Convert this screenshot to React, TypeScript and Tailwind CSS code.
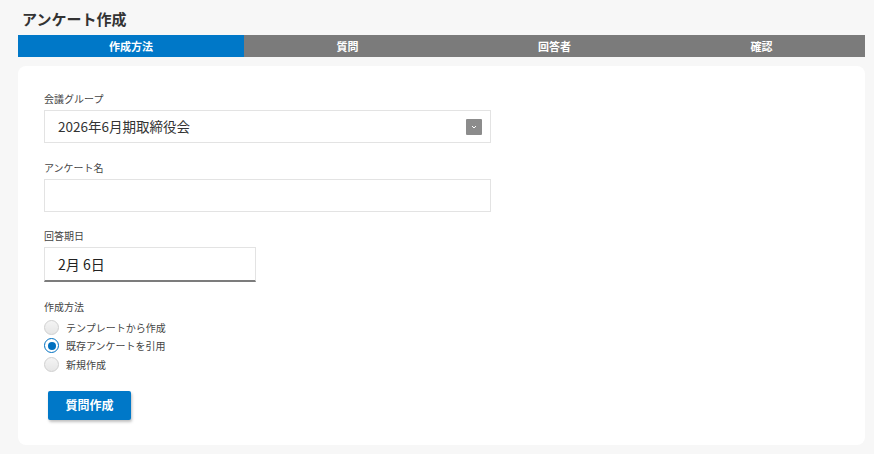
import React from "react";

const font = { fontFamily: '"Noto Sans CJK JP", "Noto Sans", sans-serif' };

function Radio({ checked, label }: { checked?: boolean; label: string }) {
  return (
    <label className="flex items-center h-[18.5px] gap-[7px]">
      {checked ? (
        <span className="w-[15px] h-[15px] rounded-full border-[1.5px] border-[#0070c0] bg-white flex items-center justify-center">
          <span className="w-[8px] h-[8px] rounded-full bg-[#0070c0]" />
        </span>
      ) : (
        <span className="w-[15px] h-[15px] rounded-full border border-[#d0d0d0] bg-gradient-to-b from-[#f4f4f4] to-[#e6e6e6]" />
      )}
      <span className="text-[10px] text-[#444]">{label}</span>
    </label>
  );
}

export default function App() {
  return (
    <div className="w-[874px] h-[454px] bg-[#f7f7f7] overflow-hidden" style={font}>
      <div className="pl-[18px] pr-[9px]">
        <h1 className="h-[35px] flex items-center pl-[4px] text-[15px] font-bold text-[#333] leading-none pt-[1px]">アンケート作成</h1>
        <div className="flex h-[22px] text-white text-[11px] font-bold">
          <div className="w-[226px] bg-[#0078c8] flex items-center justify-center">作成方法</div>
          <div className="flex-1 bg-[#7b7b7b] flex items-center justify-center">質問</div>
          <div className="flex-1 bg-[#7b7b7b] flex items-center justify-center">回答者</div>
          <div className="flex-1 bg-[#7b7b7b] flex items-center justify-center">確認</div>
        </div>
        <div className="mt-[9px] h-[379px] bg-white rounded-[8px] pl-[26px] pt-[26px]">
          <div className="text-[10px] text-[#444] leading-[14px] h-[18px]">会議グループ</div>
          <div className="w-[447px] h-[33px] border border-[#e3e3e3] flex items-center pl-[13px] pr-[8px]">
            <span className="flex-1 text-[13.5px] text-[#333]">2026年6月期取締役会</span>
            <span className="w-[16px] h-[16px] bg-[#8c8c8c] rounded-[1px] flex items-center justify-center">
              <svg width="6" height="4" viewBox="0 0 6 4"><path d="M1 1l2 2 2-2" stroke="#fff" strokeWidth="1" fill="none" /></svg>
            </span>
          </div>
          <div className="mt-[18px] text-[10px] text-[#444] leading-[14px] h-[18px]">アンケート名</div>
          <div className="w-[447px] h-[33px] border border-[#e3e3e3]" />
          <div className="mt-[17px] text-[10px] text-[#444] leading-[14px] h-[18px]">回答期日</div>
          <div className="w-[212px] h-[35px] border border-[#e3e3e3] border-b-[#7c7c7c] border-b-2 flex items-center pl-[13px] text-[14px] text-[#222]">2月 6日</div>
          <div className="mt-[18px] text-[10px] text-[#444] leading-[14px] h-[18px]">作成方法</div>
          <div className="flex flex-col">
            <Radio label="テンプレートから作成" />
            <Radio checked label="既存アンケートを引用" />
            <Radio label="新規作成" />
          </div>
          <button className="mt-[17px] ml-[4px] w-[83px] h-[29px] bg-[#0078c8] text-white text-[12px] font-bold rounded-[2px] shadow-[1px_2px_3px_rgba(0,0,0,0.25)]">質問作成</button>
        </div>
      </div>
    </div>
  );
}
